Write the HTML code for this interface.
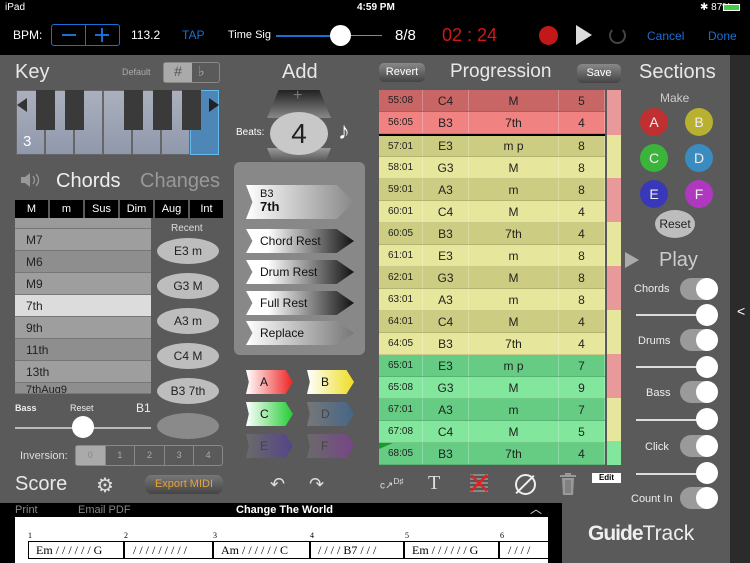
<!DOCTYPE html>
<html><head><meta charset="utf-8"><style>
*{margin:0;padding:0;box-sizing:border-box}
body{width:750px;height:563px;overflow:hidden;background:#5a5a5a;font-family:"Liberation Sans",sans-serif;position:relative;color:#fff}
.a{position:absolute}
.t{font-size:19px;color:#e8e8e8;font-weight:300}
.k{border:1px solid #666}
.row{position:absolute;left:379px;width:226px;height:22px;display:flex;font-size:12px;color:#222;border-bottom:1px solid rgba(0,0,0,.12)}
.row div{display:flex;align-items:center;justify-content:center;border-right:1px solid rgba(255,255,255,.25)}
.c1{width:44px;font-size:10px}.c2{width:46px}.c3{width:90px}.c4{width:46px}
.ov{position:absolute;background:#bdbdbd;border-radius:50%;color:#222;font-size:12px;display:flex;align-items:center;justify-content:center}
.ab{position:absolute;height:28px;font-size:12px;color:#111;display:flex;align-items:center;padding-left:14px;clip-path:polygon(0 0,84% 0,100% 50%,84% 100%,0 100%,6% 50%)}
.sc{position:absolute;width:28px;height:28px;border-radius:50%;display:flex;align-items:center;justify-content:center;font-size:14px;color:#eee}
.tg{position:absolute;width:38px;height:22px;border-radius:11px;background:#9a9a9a}
.tg::after{content:"";position:absolute;right:0;top:0;width:22px;height:22px;border-radius:50%;background:#fff}
.sl{position:absolute;height:2px;background:#ddd}
.kn{position:absolute;width:22px;height:22px;border-radius:50%;background:#fff}
.lb{position:absolute;font-size:11px;color:#eee}
.li{position:absolute;left:15px;width:136px;height:22px;font-size:12px;color:#222;padding-left:11px;line-height:22px;border-bottom:1px solid #777}
</style></head><body>
<div class="a" style="left:0;top:0;width:750px;height:55px;background:#000"></div>
<div class="a" style="left:5px;top:2px;font-size:10px">iPad</div>
<div class="a" style="left:357px;top:2px;font-size:10px;font-weight:bold">4:59 PM</div>
<div class="a" style="left:700px;top:2px;font-size:10px">✱ 87%</div>
<div class="a" style="left:723px;top:4px;width:17px;height:7px;background:#4c4;border:1px solid #fff"></div>
<div class="a" style="left:13px;top:28px;font-size:12px">BPM:</div>
<div class="a" style="left:51px;top:24px;width:69px;height:22px;border:1px solid #1a6fd6;border-radius:3px"></div>
<div class="a" style="left:85px;top:24px;width:1px;height:22px;background:#1a6fd6"></div>
<div class="a" style="left:62px;top:34px;width:14px;height:2px;background:#1a6fd6"></div>
<div class="a" style="left:95px;top:34px;width:14px;height:2px;background:#1a6fd6"></div>
<div class="a" style="left:101px;top:28px;width:2px;height:14px;background:#1a6fd6"></div>
<div class="a" style="left:131px;top:28px;font-size:12px">113.2</div>
<div class="a" style="left:182px;top:28px;font-size:12px;color:#1a6fd6">TAP</div>
<div class="a" style="left:228px;top:29px;font-size:11px">Time Sig</div>
<div class="a" style="left:276px;top:35px;width:64px;height:2px;background:#1a6fd6"></div>
<div class="a" style="left:340px;top:35px;width:42px;height:1px;background:#888"></div>
<div class="a" style="left:330px;top:25px;width:21px;height:21px;border-radius:50%;background:#fff"></div>
<div class="a" style="left:395px;top:27px;font-size:15px">8/8</div>
<div class="a" style="left:442px;top:25px;font-size:18px;color:#d01818">02 : 24</div>
<div class="a" style="left:539px;top:26px;width:19px;height:19px;border-radius:50%;background:#c21818"></div>
<div class="a" style="left:576px;top:25px;width:0;height:0;border-left:16px solid #ddd;border-top:10px solid transparent;border-bottom:10px solid transparent"></div>
<div class="a" style="left:609px;top:27px;width:17px;height:17px;border-radius:50%;border:2px solid #444;border-top-color:#000"></div>
<div class="a" style="left:647px;top:29px;font-size:12px;color:#1a6fd6">Cancel</div>
<div class="a" style="left:708px;top:29px;font-size:12px;color:#1a6fd6">Done</div>
<div class="a" style="left:730px;top:55px;width:20px;height:508px;background:#2b2b2b"></div>
<div class="a" style="left:737px;top:303px;font-size:14px">&lt;</div>

<div class="a t" style="left:15px;top:61px;font-size:20px">Key</div>
<div class="a" style="left:122px;top:67px;font-size:9px;color:#aaa">Default</div>
<div class="a" style="left:163px;top:62px;width:57px;height:21px;border:1px solid #888;border-radius:3px"></div>
<div class="a" style="left:164px;top:63px;width:28px;height:19px;background:#aaa;color:#555;text-align:center;font-size:14px">#</div>
<div class="a" style="left:198px;top:63px;color:#aaa;font-size:14px">♭</div>
<div class="a" style="left:16px;top:90px;width:204px;height:65px;background:#5a5a5a"></div>
<div class="a k" style="left:16px;top:90px;width:29px;height:65px;background:linear-gradient(#aab0bc,#9098ac)"></div>
<div class="a k" style="left:45px;top:90px;width:29px;height:65px;background:linear-gradient(#aab0bc,#9098ac)"></div>
<div class="a k" style="left:74px;top:90px;width:29px;height:65px;background:linear-gradient(#aab0bc,#9098ac)"></div>
<div class="a k" style="left:103px;top:90px;width:29px;height:65px;background:linear-gradient(#aab0bc,#9098ac)"></div>
<div class="a k" style="left:132px;top:90px;width:29px;height:65px;background:linear-gradient(#aab0bc,#9098ac)"></div>
<div class="a k" style="left:161px;top:90px;width:29px;height:65px;background:linear-gradient(#aab0bc,#9098ac)"></div>
<div class="a" style="left:190px;top:90px;width:29px;height:65px;background:#4f86b8;border:1px solid #66bbee"></div>
<div class="a" style="left:36px;top:90px;width:19px;height:40px;background:#3a3a3a"></div>
<div class="a" style="left:65px;top:90px;width:19px;height:40px;background:#3a3a3a"></div>
<div class="a" style="left:124px;top:90px;width:19px;height:40px;background:#3a3a3a"></div>
<div class="a" style="left:153px;top:90px;width:19px;height:40px;background:#3a3a3a"></div>
<div class="a" style="left:182px;top:90px;width:19px;height:40px;background:#3a3a3a"></div>
<div class="a" style="left:17px;top:98px;border-right:10px solid #333;border-top:7px solid transparent;border-bottom:7px solid transparent"></div>
<div class="a" style="left:209px;top:98px;border-left:10px solid #222;border-top:7px solid transparent;border-bottom:7px solid transparent"></div>
<div class="a" style="left:23px;top:133px;font-size:15px">3</div>

<svg class="a" style="left:20px;top:172px" width="22" height="16" viewBox="0 0 22 16"><path d="M1 5h4l5-4v14l-5-4H1z" fill="#999"/><path d="M13 4q3 4 0 8M16 2q5 6 0 12" stroke="#999" fill="none" stroke-width="1.3"/></svg>
<div class="a" style="left:56px;top:170px;font-size:20px;color:#eee;font-weight:300">Chords</div>
<div class="a" style="left:140px;top:170px;font-size:20px;color:#999;font-weight:300">Changes</div>
<div class="a" style="left:15px;top:200px;width:208px;height:18px;display:flex;gap:2px;font-size:11px">
<div style="width:33px;background:#000;text-align:center;line-height:18px">M</div><div style="width:33px;background:#000;text-align:center;line-height:18px">m</div><div style="width:33px;background:#000;text-align:center;line-height:18px">Sus</div><div style="width:33px;background:#000;text-align:center;line-height:18px">Dim</div><div style="width:33px;background:#000;text-align:center;line-height:18px">Aug</div><div style="width:33px;background:#000;text-align:center;line-height:18px">Int</div></div>
<div class="li" style="top:218px;height:11px;background:#9a9a9a"></div>
<div class="li" style="top:229px;background:#9e9e9e">M7</div>
<div class="li" style="top:251px;background:#8e8e8e">M6</div>
<div class="li" style="top:273px;background:#9e9e9e">M9</div>
<div class="li" style="top:295px;background:#dcdcdc">7th</div>
<div class="li" style="top:317px;background:#9e9e9e">9th</div>
<div class="li" style="top:339px;background:#8e8e8e">11th</div>
<div class="li" style="top:361px;background:#9e9e9e">13th</div>
<div class="li" style="top:383px;height:11px;background:#8e8e8e;font-size:11px;line-height:14px;overflow:hidden">7thAug9</div>
<div class="a" style="left:171px;top:223px;font-size:10px;color:#ddd">Recent</div>
<div class="ov" style="left:157px;top:238px;width:62px;height:26px">E3 m</div>
<div class="ov" style="left:157px;top:273px;width:62px;height:26px">G3 M</div>
<div class="ov" style="left:157px;top:308px;width:62px;height:26px">A3 m</div>
<div class="ov" style="left:157px;top:343px;width:62px;height:26px">C4 M</div>
<div class="ov" style="left:157px;top:378px;width:62px;height:26px">B3 7th</div>
<div class="ov" style="left:157px;top:413px;width:62px;height:26px;background:#8a8a8a"></div>
<div class="lb" style="left:15px;top:403px;font-size:9px;font-weight:bold">Bass</div>
<div class="lb" style="left:70px;top:403px;font-size:9px">Reset</div>
<div class="lb" style="left:136px;top:401px;font-size:12px">B1</div>
<div class="sl" style="left:15px;top:427px;width:136px;background:#bbb"></div>
<div class="kn" style="left:72px;top:416px"></div>
<div class="lb" style="left:20px;top:450px;font-size:11px;color:#ddd">Inversion:</div>
<div class="a" style="left:75px;top:445px;width:148px;height:21px;border:1px solid #888;border-radius:3px;display:flex;font-size:9px;color:#aaa">
<div style="width:29px;background:#aaa;color:#888;text-align:center;line-height:19px">0</div><div style="width:30px;border-left:1px solid #888;text-align:center;line-height:19px">1</div><div style="width:30px;border-left:1px solid #888;text-align:center;line-height:19px">2</div><div style="width:30px;border-left:1px solid #888;text-align:center;line-height:19px">3</div><div style="width:29px;border-left:1px solid #888;text-align:center;line-height:19px">4</div></div>
<div class="a t" style="left:15px;top:473px;font-size:20px">Score</div>
<div class="a" style="left:96px;top:473px;font-size:20px;color:#ddd">⚙</div>
<div class="a" style="left:145px;top:475px;width:78px;height:19px;border-radius:7px;background:linear-gradient(#777,#444);color:#e8a23a;font-size:11px;text-align:center;line-height:19px">Export MIDI</div>

<div class="a t" style="left:282px;top:61px;font-size:20px">Add</div>
<div class="a" style="left:267px;top:90px;width:64px;height:28px;background:linear-gradient(#222,#888);clip-path:polygon(18% 0,82% 0,100% 100%,0 100%)"></div>
<div class="a" style="left:293px;top:87px;color:#777;font-size:16px">+</div>
<div class="a" style="left:267px;top:148px;width:64px;height:28px;background:linear-gradient(#999,#111);clip-path:polygon(0 0,100% 0,82% 100%,18% 100%)"></div>
<div class="a" style="left:294px;top:158px;color:#777;font-size:14px">−</div>
<div class="a" style="left:270px;top:112px;width:58px;height:43px;border-radius:50%;background:#c8c8c8;color:#222;font-size:28px;text-align:center;line-height:43px;font-weight:300">4</div>
<div class="a" style="left:236px;top:127px;font-size:10px">Beats:</div>
<div class="a" style="left:338px;top:118px;font-size:24px">♪</div>
<div class="a" style="left:234px;top:162px;width:131px;height:193px;border-radius:6px;background:#888"></div>
<div class="ab" style="left:246px;top:185px;width:108px;height:34px;background:linear-gradient(90deg,#fff,#888);line-height:1;display:block;padding-top:4px"><div style="font-size:11px">B3</div><div style="font-size:13px;font-weight:bold">7th</div></div>
<div class="ab" style="left:246px;top:229px;width:108px;height:24px;background:linear-gradient(90deg,#fff 20%,#111)">Chord Rest</div>
<div class="ab" style="left:246px;top:260px;width:108px;height:24px;background:linear-gradient(90deg,#fff 20%,#111)">Drum Rest</div>
<div class="ab" style="left:246px;top:291px;width:108px;height:24px;background:linear-gradient(90deg,#fff 20%,#111)">Full Rest</div>
<div class="ab" style="left:246px;top:321px;width:108px;height:24px;background:linear-gradient(90deg,#fff,#777)">Replace</div>
<div class="ab" style="left:246px;top:370px;width:47px;height:24px;background:linear-gradient(90deg,#fff,#e22)">A</div>
<div class="ab" style="left:307px;top:370px;width:47px;height:24px;background:linear-gradient(90deg,#fff,#ed2)">B</div>
<div class="ab" style="left:246px;top:402px;width:47px;height:24px;background:linear-gradient(90deg,#fff,#2c3)">C</div>
<div class="ab" style="left:307px;top:402px;width:47px;height:24px;background:linear-gradient(90deg,#777,#468);color:#444">D</div>
<div class="ab" style="left:246px;top:434px;width:47px;height:24px;background:linear-gradient(90deg,#6a6a6a,#548);color:#444">E</div>
<div class="ab" style="left:307px;top:434px;width:47px;height:24px;background:linear-gradient(90deg,#6a6a6a,#748);color:#444">F</div>
<div class="a" style="left:270px;top:474px;font-size:18px;color:#ddd">↶</div>
<div class="a" style="left:309px;top:474px;font-size:18px;color:#ddd">↷</div>

<div class="a" style="left:379px;top:63px;width:46px;height:19px;border-radius:5px;background:linear-gradient(#888,#444);font-size:11px;text-align:center;line-height:19px">Revert</div>
<div class="a t" style="left:450px;top:61px">Progression</div>
<div class="a" style="left:577px;top:64px;width:44px;height:19px;border-radius:5px;background:linear-gradient(#888,#444);font-size:11px;text-align:center;line-height:19px">Save</div>
<div class="row" style="top:90px;background:#c86666"><div class="c1">55:08</div><div class="c2">C4</div><div class="c3">M</div><div class="c4">5</div></div>
<div class="row" style="top:112px;background:#f08282"><div class="c1">56:05</div><div class="c2">B3</div><div class="c3">7th</div><div class="c4">4</div></div>
<div class="a" style="left:379px;top:134px;width:226px;height:2px;background:#000"></div>
<div class="row" style="top:136px;height:21px;background:#cccc82"><div class="c1">57:01</div><div class="c2">E3</div><div class="c3">m p</div><div class="c4">8</div></div>
<div class="row" style="top:157px;background:#e6e69c"><div class="c1">58:01</div><div class="c2">G3</div><div class="c3">M</div><div class="c4">8</div></div>
<div class="row" style="top:179px;background:#cccc82"><div class="c1">59:01</div><div class="c2">A3</div><div class="c3">m</div><div class="c4">8</div></div>
<div class="row" style="top:201px;background:#e6e69c"><div class="c1">60:01</div><div class="c2">C4</div><div class="c3">M</div><div class="c4">4</div></div>
<div class="row" style="top:223px;background:#cccc82"><div class="c1">60:05</div><div class="c2">B3</div><div class="c3">7th</div><div class="c4">4</div></div>
<div class="row" style="top:245px;background:#e6e69c"><div class="c1">61:01</div><div class="c2">E3</div><div class="c3">m</div><div class="c4">8</div></div>
<div class="row" style="top:267px;background:#cccc82"><div class="c1">62:01</div><div class="c2">G3</div><div class="c3">M</div><div class="c4">8</div></div>
<div class="row" style="top:289px;background:#e6e69c"><div class="c1">63:01</div><div class="c2">A3</div><div class="c3">m</div><div class="c4">8</div></div>
<div class="row" style="top:311px;background:#cccc82"><div class="c1">64:01</div><div class="c2">C4</div><div class="c3">M</div><div class="c4">4</div></div>
<div class="row" style="top:333px;background:#e6e69c"><div class="c1">64:05</div><div class="c2">B3</div><div class="c3">7th</div><div class="c4">4</div></div>
<div class="row" style="top:355px;background:#66cc84"><div class="c1">65:01</div><div class="c2">E3</div><div class="c3">m p</div><div class="c4">7</div></div>
<div class="row" style="top:377px;background:#82e69c"><div class="c1">65:08</div><div class="c2">G3</div><div class="c3">M</div><div class="c4">9</div></div>
<div class="row" style="top:399px;background:#66cc84"><div class="c1">67:01</div><div class="c2">A3</div><div class="c3">m</div><div class="c4">7</div></div>
<div class="row" style="top:421px;background:#82e69c"><div class="c1">67:08</div><div class="c2">C4</div><div class="c3">M</div><div class="c4">5</div></div>
<div class="row" style="top:443px;background:#66cc84"><div class="c1">68:05</div><div class="c2">B3</div><div class="c3">7th</div><div class="c4">4</div></div>
<div class="a" style="left:379px;top:443px;border-left:14px solid #1a9a2a;border-bottom:6px solid transparent"></div>
<div class="a" style="left:607px;top:90px;width:14px;height:45px;background:#e89a9a"></div>
<div class="a" style="left:607px;top:135px;width:14px;height:43px;background:#e6e69c"></div>
<div class="a" style="left:607px;top:178px;width:14px;height:44px;background:#e89a9a"></div>
<div class="a" style="left:607px;top:222px;width:14px;height:44px;background:#e6e69c"></div>
<div class="a" style="left:607px;top:266px;width:14px;height:44px;background:#e89a9a"></div>
<div class="a" style="left:607px;top:310px;width:14px;height:44px;background:#e6e69c"></div>
<div class="a" style="left:607px;top:354px;width:14px;height:44px;background:#e89a9a"></div>
<div class="a" style="left:607px;top:398px;width:14px;height:43px;background:#e6e69c"></div>
<div class="a" style="left:607px;top:441px;width:14px;height:24px;background:#82e69c"></div>
<div class="a" style="left:380px;top:476px;font-size:10px;color:#ddd">c↗<sup>D♯</sup></div>
<div class="a" style="left:428px;top:472px;font-size:20px;color:#ddd;font-family:'Liberation Serif',serif">T</div>
<div class="a" style="left:470px;top:474px;width:18px;height:18px;background:repeating-linear-gradient(#888 0 2px,#555 2px 4px)"></div>
<svg class="a" style="left:468px;top:472px" width="22" height="22"><path d="M3 3L19 19M19 3L3 19" stroke="#d22" stroke-width="2.5"/></svg>
<div class="a" style="left:515px;top:474px;width:21px;height:21px;border-radius:50%;border:2px solid #eee"></div>
<div class="a" style="left:524px;top:472px;width:2px;height:25px;background:#eee;transform:rotate(45deg)"></div>
<svg class="a" style="left:559px;top:472px" width="18" height="24"><rect x="1" y="3" width="16" height="2" fill="#999"/><rect x="6" y="1" width="6" height="2" fill="#999"/><path d="M3 6h12l-1 17H4z" fill="#999"/><path d="M7 8v13M9 8v13M11 8v13" stroke="#666"/></svg>
<div class="a" style="left:592px;top:473px;width:29px;height:10px;background:#fff;color:#000;font-size:8px;font-weight:bold;text-align:center;line-height:10px">Edit</div>

<div class="a t" style="left:639px;top:61px;font-size:20px">Sections</div>
<div class="a" style="left:660px;top:91px;font-size:12px;color:#ccc">Make</div>
<div class="sc" style="left:640px;top:108px;background:#c03030">A</div>
<div class="sc" style="left:685px;top:108px;background:#b8b030">B</div>
<div class="sc" style="left:640px;top:144px;background:#3ab43a">C</div>
<div class="sc" style="left:685px;top:144px;background:#3a8cc0">D</div>
<div class="sc" style="left:640px;top:180px;background:#3838b8">E</div>
<div class="sc" style="left:685px;top:180px;background:#b038c0">F</div>
<div class="ov" style="left:655px;top:210px;width:40px;height:28px;font-size:12px">Reset</div>
<div class="a" style="left:625px;top:252px;border-left:14px solid #aaa;border-top:8px solid transparent;border-bottom:8px solid transparent"></div>
<div class="a t" style="left:659px;top:249px;color:#ccc;font-size:20px">Play</div>
<div class="lb" style="left:634px;top:283px">Chords</div><div class="tg" style="left:680px;top:278px"></div>
<div class="sl" style="left:636px;top:314px;width:70px"></div><div class="kn" style="left:696px;top:304px"></div>
<div class="lb" style="left:638px;top:335px">Drums</div><div class="tg" style="left:680px;top:329px"></div>
<div class="sl" style="left:636px;top:366px;width:70px"></div><div class="kn" style="left:696px;top:356px"></div>
<div class="lb" style="left:646px;top:387px">Bass</div><div class="tg" style="left:680px;top:381px"></div>
<div class="sl" style="left:636px;top:419px;width:70px"></div><div class="kn" style="left:696px;top:408px"></div>
<div class="lb" style="left:645px;top:441px">Click</div><div class="tg" style="left:680px;top:435px"></div>
<div class="sl" style="left:636px;top:473px;width:70px"></div><div class="kn" style="left:696px;top:462px"></div>
<div class="lb" style="left:631px;top:493px">Count In</div><div class="tg" style="left:680px;top:487px"></div>
<div class="a" style="left:588px;top:522px;font-size:21px;color:#eee"><b style="letter-spacing:-1px">Guide</b>Track</div>

<div class="a" style="left:0;top:503px;width:562px;height:60px;background:#000"></div>
<div class="a" style="left:15px;top:504px;font-size:11px;color:#888">Print</div>
<div class="a" style="left:78px;top:504px;font-size:11px;color:#888">Email PDF</div>
<div class="a" style="left:236px;top:504px;font-size:11px;font-weight:bold">Change The World</div>
<div class="a" style="left:530px;top:500px;font-size:12px;color:#ddd">︿</div>
<div class="a" style="left:15px;top:517px;width:533px;height:46px;background:#fff"></div>
<div class="a" style="left:28px;top:541px;width:520px;height:18px;border:1px solid #000;border-right:none"></div>
<div class="a" style="font-family:'Liberation Serif',serif;font-size:8px;color:#000;left:28px;top:531px">1</div>
<div class="a" style="font-family:'Liberation Serif',serif;font-size:8px;color:#000;left:124px;top:531px">2</div>
<div class="a" style="font-family:'Liberation Serif',serif;font-size:8px;color:#000;left:213px;top:531px">3</div>
<div class="a" style="font-family:'Liberation Serif',serif;font-size:8px;color:#000;left:310px;top:531px">4</div>
<div class="a" style="font-family:'Liberation Serif',serif;font-size:8px;color:#000;left:405px;top:531px">5</div>
<div class="a" style="font-family:'Liberation Serif',serif;font-size:8px;color:#000;left:500px;top:531px">6</div>
<div class="a" style="left:123px;top:541px;width:2px;height:18px;background:#000"></div>
<div class="a" style="left:212px;top:541px;width:2px;height:18px;background:#000"></div>
<div class="a" style="left:309px;top:541px;width:2px;height:18px;background:#000"></div>
<div class="a" style="left:403px;top:541px;width:2px;height:18px;background:#000"></div>
<div class="a" style="left:498px;top:541px;width:2px;height:18px;background:#000"></div>
<div class="a" style="font-family:'Liberation Serif',serif;font-size:12px;color:#000;left:36px;top:543px;white-space:pre">Em / / / / / / G</div>
<div class="a" style="font-family:'Liberation Serif',serif;font-size:12px;color:#000;left:133px;top:543px;white-space:pre">/ / / / / / / / /</div>
<div class="a" style="font-family:'Liberation Serif',serif;font-size:12px;color:#000;left:221px;top:543px;white-space:pre">Am / / / / / / C</div>
<div class="a" style="font-family:'Liberation Serif',serif;font-size:12px;color:#000;left:318px;top:543px;white-space:pre">/ / / / B7 / / /</div>
<div class="a" style="font-family:'Liberation Serif',serif;font-size:12px;color:#000;left:412px;top:543px;white-space:pre">Em / / / / / / G</div>
<div class="a" style="font-family:'Liberation Serif',serif;font-size:12px;color:#000;left:508px;top:543px;white-space:pre">/ / / /</div>
</body></html>
